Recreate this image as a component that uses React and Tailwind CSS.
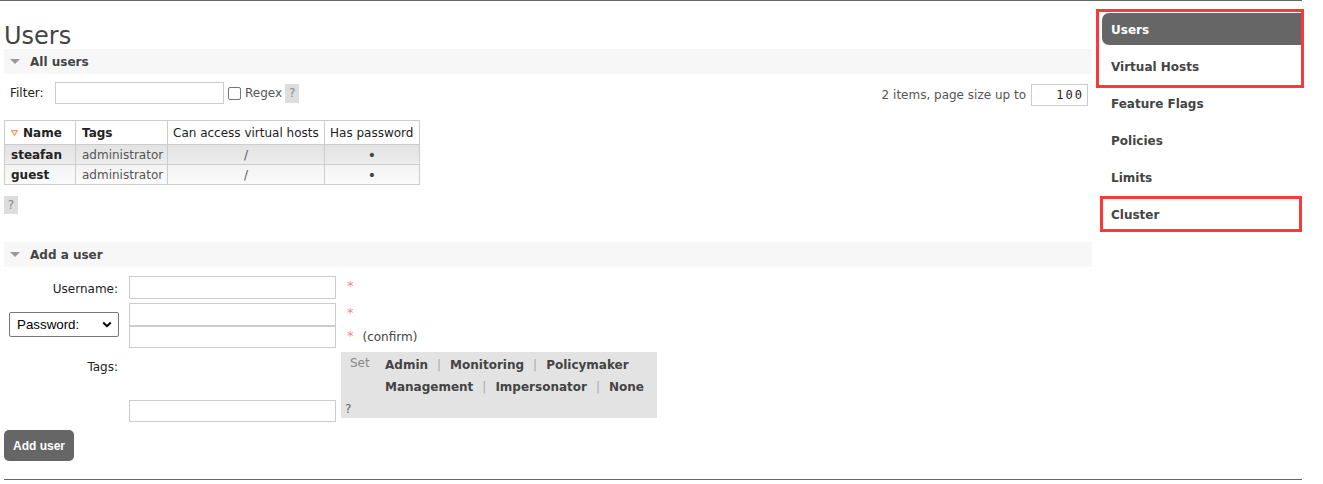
import React from "react";

function SectionBar({ title }) {
  return (
    <div className="h-[25px] bg-[#f7f7f7] flex items-center pl-[6px]">
      <span className="w-0 h-0 border-l-[5px] border-r-[5px] border-t-[5px] border-l-transparent border-r-transparent border-t-[#999]" />
      <span className="ml-[10px] font-bold text-[#444]">{title}</span>
    </div>
  );
}

function Help({ className = "" }) {
  return (
    <div className={"bg-[#ddd] text-[#888] flex items-center justify-center " + className}>?</div>
  );
}

function Sep() {
  return <span className="mx-[9px] font-normal text-[#aaa]">|</span>;
}

function Input({ className = "" }) {
  return <div className={"border border-[#ccc] bg-white " + className} />;
}

export default function App() {
  const navItems = ["Users", "Virtual Hosts", "Feature Flags", "Policies", "Limits", "Cluster"];
  return (
    <div className="w-[1323px] h-[484px] bg-white relative overflow-hidden text-[12px] leading-[16px] text-[#222] [font-family:'DejaVu_Sans',Verdana,sans-serif]">
      <div className="h-px w-[1302px] bg-[#666]" />
      <div className="flex pl-[4px]">
        <main className="w-[1088px]">
          <h1 className="mt-[21px] h-[27px] text-[24px] leading-[28px] text-[#444] font-normal">Users</h1>
          <SectionBar title="All users" />

          <div className="mt-[8px] h-[24px] flex items-start justify-between pr-[4px]">
            <div className="flex items-center h-[22px] pl-[6px]">
              <span className="w-[45px]">Filter:</span>
              <Input className="w-[169px] h-[22px]" />
              <span className="ml-[4px] w-[13px] h-[13px] border border-[#767676] rounded-[2px] bg-white" />
              <span className="ml-[4px] text-[#555]">Regex</span>
              <Help className="ml-[3px] w-[14px] h-[19px]" />
            </div>
            <div className="flex items-center h-[22px] mt-[2px]">
              <span className="text-[#555]">2 items, page size up to</span>
              <div className="ml-[5px] w-[57px] h-[22px] border border-[#ccc] flex items-center justify-end pr-[3px] text-[#222] tracking-[2px] [font-family:'DejaVu_Sans_Mono',monospace]">
                100
              </div>
            </div>
          </div>

          <div className="mt-[14px] inline-grid grid-cols-[71px_92px_157px_95px] border-l border-t border-[#ccc] whitespace-nowrap">
            <div className="h-[24px] border-r border-b border-[#ccc] flex items-center pl-[6px]">
              <svg width="7" height="6" viewBox="0 0 7 6" className="mr-[5px]">
                <path d="M0.6 0.6 H6.4 L3.5 5.2 Z" fill="none" stroke="#f7935f" strokeWidth="1.1" />
              </svg>
              <span className="font-bold">Name</span>
            </div>
            <div className="h-[24px] border-r border-b border-[#ccc] flex items-center px-[6px] font-bold">Tags</div>
            <div className="h-[24px] border-r border-b border-[#ccc] flex items-center px-[5px]">Can access virtual hosts</div>
            <div className="h-[24px] border-r border-b border-[#ccc] flex items-center pl-[5px] overflow-hidden">Has password</div>

            {[
              ["steafan", "bg-[linear-gradient(#e2e2e2,#ededed)]"],
              ["guest", "bg-[linear-gradient(#f3f3f3,#fbfbfb)]"],
            ].map(([name, bg]) => (
              <React.Fragment key={name}>
                <div className={"h-[20px] border-r border-b border-[#ccc] flex items-center px-[6px] font-bold " + bg}>{name}</div>
                <div className={"h-[20px] border-r border-b border-[#ccc] flex items-center px-[6px] text-[#555] " + bg}>administrator</div>
                <div className={"h-[20px] border-r border-b border-[#ccc] flex items-center justify-center text-[#555] " + bg}>/</div>
                <div className={"h-[20px] border-r border-b border-[#ccc] flex items-center justify-center text-[#444] text-[14px] " + bg}>•</div>
              </React.Fragment>
            ))}
          </div>

          <Help className="mt-[11px] w-[14px] h-[18px]" />

          <div className="mt-[28px]">
            <SectionBar title="Add a user" />
          </div>

          <div className="mt-[9px] flex items-start">
            <div className="w-[114px] h-[23px] text-right pt-[5px]">Username:</div>
            <Input className="ml-[11px] w-[207px] h-[23px]" />
            <span className="ml-[11px] mt-[2px] text-[13px] text-[#f58a8a]">*</span>
          </div>

          <div className="mt-[4px] flex items-start">
            <div className="w-[114px] pl-[5px] pt-[9px]">
              <div className="w-[110px] h-[25px] border border-[#767676] rounded-[2px] bg-white flex items-center justify-between pl-[7px] pr-[6px] text-black text-[13.33px] [font-family:'Liberation_Sans',Arial,sans-serif]">
                <span>Password:</span>
                <svg width="10" height="7" viewBox="0 0 10 7">
                  <path d="M1.2 1.5 L5 5.2 L8.8 1.5" fill="none" stroke="#000" strokeWidth="2" />
                </svg>
              </div>
            </div>
            <div className="ml-[11px] w-[207px] flex flex-col">
              <Input className="h-[23px]" />
              <Input className="h-[22px]" />
            </div>
            <div className="ml-[11px] flex flex-col">
              <div className="h-[23px]">
                <span className="block mt-[2px] text-[13px] text-[#f58a8a]">*</span>
              </div>
              <div className="h-[22px] flex items-start">
                <span className="mt-[2px] text-[13px] text-[#f58a8a]">*</span>
                <span className="ml-[9px] leading-[22px] text-[#444]">(confirm)</span>
              </div>
            </div>
          </div>

          <div className="mt-[4px] flex items-start">
            <div className="w-[114px] text-right pt-[7px]">Tags:</div>
            <div className="ml-[11px] w-[207px] h-[70px] flex flex-col justify-end">
              <Input className="h-[22px]" />
            </div>
            <div className="ml-[5px] w-[316px] h-[66px] bg-[#e3e3e3] pt-[2px] flex flex-col">
              <div className="flex items-start">
                <span className="w-[44px] pl-[9px] leading-[18px] text-[#888]">Set</span>
                <div className="flex flex-col font-bold text-[#444] leading-[22px]">
                  <div>
                    Admin<Sep />Monitoring<Sep />Policymaker
                  </div>
                  <div>
                    Management<Sep />Impersonator<Sep />None
                  </div>
                </div>
              </div>
              <div className="mt-[2px] pl-[4px] leading-[18px] text-[#666]">?</div>
            </div>
          </div>

          <div className="mt-[8px] w-[70px] h-[31px] bg-[#666] rounded-[5px] flex items-center justify-center text-white font-bold text-[12px] [font-family:'Liberation_Sans',Arial,sans-serif]">
            Add user
          </div>
        </main>

        <nav className="ml-[10px] w-[200px] pt-[12px] flex flex-col gap-[5px]">
          {navItems.map((item, i) => (
            <div
              key={item}
              className={
                "h-[32px] flex items-center pl-[9px] pt-[1px] font-bold " +
                (i === 0 ? "bg-[#666] text-white rounded-l-[7px]" : "text-[#444]")
              }
            >
              {item}
            </div>
          ))}
        </nav>
      </div>
      <div className="mt-[18px] ml-[4px] h-px w-[1298px] bg-[#666]" />

      <div className="absolute left-[1096px] top-[9px] w-[208px] h-[79px] border-[3px] border-[#fb3939]" />
      <div className="absolute left-[1100px] top-[196px] w-[202px] h-[36px] border-[3px] border-[#fb3939]" />
    </div>
  );
}
